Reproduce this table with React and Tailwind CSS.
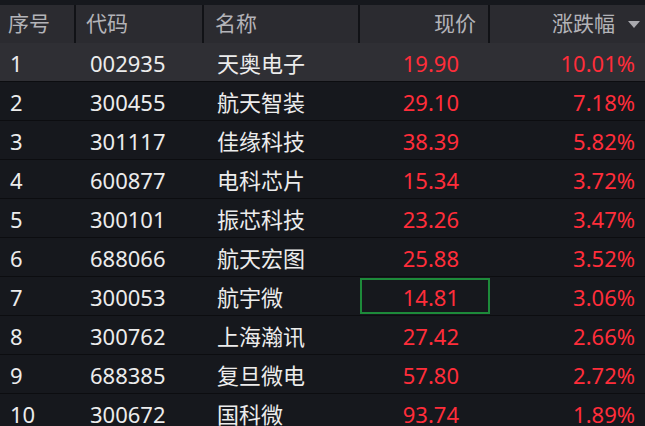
const rows = [
  ["1", "002935", "天奥电子", "19.90", "10.01%"],
  ["2", "300455", "航天智装", "29.10", "7.18%"],
  ["3", "301117", "佳缘科技", "38.39", "5.82%"],
  ["4", "600877", "电科芯片", "15.34", "3.72%"],
  ["5", "300101", "振芯科技", "23.26", "3.47%"],
  ["6", "688066", "航天宏图", "25.88", "3.52%"],
  ["7", "300053", "航宇微", "14.81", "3.06%"],
  ["8", "300762", "上海瀚讯", "27.42", "2.66%"],
  ["9", "688385", "复旦微电", "57.80", "2.72%"],
  ["10", "300672", "国科微", "93.74", "1.89%"],
];

const font = { fontFamily: '"Noto Sans", "Noto Sans CJK SC", sans-serif' };

export default function App() {
  return (
    <div
      className="w-[645px] h-[426px] overflow-hidden bg-[#16181d] pt-[5px]"
      style={font}
    >
      <div className="flex h-[38px] bg-[#2b2b30] text-[21px] text-[#b3b3b8]">
        <div className="w-[76px] flex items-center pl-[8px] border-r-2 border-[#111216]">序号</div>
        <div className="w-[128px] flex items-center pl-[10px] border-r-2 border-[#111216]">代码</div>
        <div className="w-[156px] flex items-center pl-[11px] border-r-2 border-[#111216]">名称</div>
        <div className="w-[130px] flex items-center justify-end pr-[12px] border-r-2 border-[#111216]">现价</div>
        <div className="flex-1 flex items-center justify-end pr-[5px]">
          <span>涨跌幅</span>
          <svg width="12" height="8" viewBox="0 0 12 8" className="ml-[13px] mt-[1px]">
            <polygon points="0,0 12,0 6,7" fill="#a9a9ae" />
          </svg>
        </div>
      </div>

      {rows.map((r, i) => (
        <div
          key={r[0]}
          className={`flex text-[22px] ${
            i === 0 ? "h-[38px] bg-[#2f2f34]" : "h-[39px] border-t border-[#0c0d10]"
          }`}
        >
          <div className="w-[76px] flex items-center pl-[10px] pt-[3px] text-[#ececec]">{r[0]}</div>
          <div className="w-[128px] flex items-center pl-[14px] pt-[3px] text-[#ececec]">{r[1]}</div>
          <div className="w-[156px] flex items-center pl-[13px] pt-[3px] text-[#ececec]">{r[2]}</div>
          <div className="w-[130px] flex items-center py-[1px]">
            <div
              className={`w-full h-full flex items-center justify-end pr-[29px] pt-[2px] text-[#ff2d3a] border-2 ${
                i === 6 ? "border-[#1d8a3a]" : "border-transparent"
              }`}
            >
              {r[3]}
            </div>
          </div>
          <div className="flex-1 flex items-center justify-end pr-[10px] pt-[3px] text-[#ff2d3a]">{r[4]}</div>
        </div>
      ))}
    </div>
  );
}
